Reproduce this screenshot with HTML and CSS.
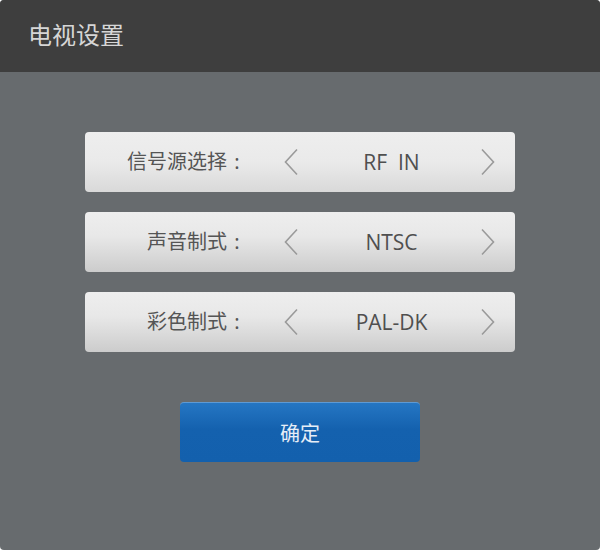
FILE: index.html
```html
<!DOCTYPE html>
<html lang="zh">
<head>
<meta charset="utf-8">
<link rel="stylesheet" href="styles.css">
</head>
<body>
<div class="window">
  <div class="header"><span class="title">电视设置</span></div>
  <div class="content">
    <div class="rows">
      <div class="row row-first">
        <div class="label">信号源选择<span class="colon">:</span></div>
        <svg class="arrow" viewBox="0 0 14 28" width="14" height="28"><polyline points="13,1.5 1.5,14 13,26.5"/></svg>
        <div class="value">RF&nbsp;&nbsp;IN</div>
        <svg class="arrow" viewBox="0 0 14 28" width="14" height="28"><polyline points="1,1.5 12.5,14 1,26.5"/></svg>
      </div>
      <div class="row">
        <div class="label">声音制式<span class="colon">:</span></div>
        <svg class="arrow" viewBox="0 0 14 28" width="14" height="28"><polyline points="13,1.5 1.5,14 13,26.5"/></svg>
        <div class="value">NTSC</div>
        <svg class="arrow" viewBox="0 0 14 28" width="14" height="28"><polyline points="1,1.5 12.5,14 1,26.5"/></svg>
      </div>
      <div class="row">
        <div class="label">彩色制式<span class="colon">:</span></div>
        <svg class="arrow" viewBox="0 0 14 28" width="14" height="28"><polyline points="13,1.5 1.5,14 13,26.5"/></svg>
        <div class="value">PAL-DK</div>
        <svg class="arrow" viewBox="0 0 14 28" width="14" height="28"><polyline points="1,1.5 12.5,14 1,26.5"/></svg>
      </div>
    </div>
    <div class="btn">确定</div>
  </div>
</div>
</body>
</html>
```
FILE: styles.css
```css
html, body {
  margin: 0;
  padding: 0;
  background: #ffffff;
}
.window {
  width: 600px;
  height: 550px;
  border-radius: 4px;
  overflow: hidden;
  background: #676b6e;
  font-family: "Noto Sans CJK SC", "Noto Sans", sans-serif;
}
.header {
  height: 72px;
  background: #3e3e3e;
  display: flex;
  align-items: center;
  padding-left: 28px;
}
.title {
  font-size: 24px;
  color: #d6d6d6;
  line-height: 1;
  margin-top: -4px;
}
.content {
  display: flex;
  flex-direction: column;
  align-items: center;
  padding-top: 60px;
}
.rows {
  display: flex;
  flex-direction: column;
  gap: 20px;
}
.row {
  width: 430px;
  height: 60px;
  box-sizing: border-box;
  border-radius: 4px;
  background: linear-gradient(#eeeeee, #e8e8e8 40%, #cccccc);
  display: flex;
  align-items: center;
}
.row-first {
  background: linear-gradient(#eeeeee, #eaeaea 50%, #d9d9d9);
}
.label {
  width: 162px;
  text-align: right;
  font-size: 20px;
  color: #555555;
  line-height: 1;
  margin-top: -2px;
}
.colon {
  display: inline-block;
  width: 20px;
  text-align: center;
  font-family: "Noto Sans", sans-serif;
}
.arrow {
  flex: none;
  fill: none;
  stroke: #9a9a9a;
  stroke-width: 1.6;
}
.row .arrow:first-of-type {
  margin-left: 37px;
}
.value {
  flex: 1;
  text-align: center;
  font-family: "Open Sans", "Noto Sans", sans-serif;
  font-size: 21px;
  color: #4f4f4f;
  line-height: 1;
  padding-left: 4px;
}
.row .arrow:last-of-type {
  margin-right: 20px;
}
.btn {
  margin-top: 50px;
  width: 240px;
  height: 60px;
  box-sizing: border-box;
  border-radius: 4px;
  border-top: 1px solid #5e9ad4;
  background: linear-gradient(#2576c3, #1461ae 45%, #1360ad);
  color: #e6eef7;
  font-size: 20px;
  display: flex;
  align-items: center;
  justify-content: center;
}
```
